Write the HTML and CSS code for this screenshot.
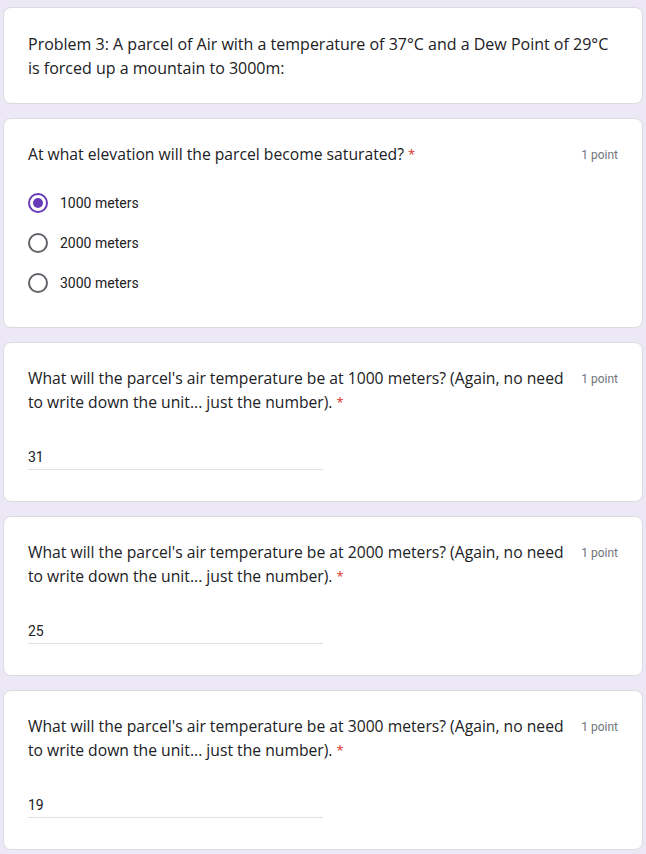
FILE: index.html
```html
<!DOCTYPE html>
<html>
<head>
<meta charset="utf-8">
<link rel="stylesheet" href="styles.css">
</head>
<body>
<main class="form">
  <section class="card header-card">
    <div class="section-title">Problem 3: A parcel of Air with a temperature of 37°C and a Dew Point of 29°C is forced up a mountain to 3000m:</div>
  </section>

  <section class="card question radio-q">
    <div class="q-head">
      <div class="q-title">At what elevation will the parcel become saturated? <span class="req">*</span></div>
      <div class="points">1 point</div>
    </div>
    <div class="options">
      <div class="option"><span class="radio checked"></span><span class="opt-label">1000 meters</span></div>
      <div class="option"><span class="radio"></span><span class="opt-label">2000 meters</span></div>
      <div class="option"><span class="radio"></span><span class="opt-label">3000 meters</span></div>
    </div>
  </section>

  <section class="card question">
    <div class="q-head">
      <div class="q-title">What will the parcel's air temperature be at 1000 meters? (Again, no need to write down the unit... just the number). <span class="req">*</span></div>
      <div class="points">1 point</div>
    </div>
    <div class="answer">31</div>
  </section>

  <section class="card question">
    <div class="q-head">
      <div class="q-title">What will the parcel's air temperature be at 2000 meters? (Again, no need to write down the unit... just the number). <span class="req">*</span></div>
      <div class="points">1 point</div>
    </div>
    <div class="answer">25</div>
  </section>

  <section class="card question">
    <div class="q-head">
      <div class="q-title">What will the parcel's air temperature be at 3000 meters? (Again, no need to write down the unit... just the number). <span class="req">*</span></div>
      <div class="points">1 point</div>
    </div>
    <div class="answer">19</div>
  </section>
</main>
</body>
</html>
```

FILE: styles.css
```css
html, body {
  margin: 0;
  padding: 0;
  background: #ede8f6;
}

body {
  font-family: "Open Sans", "Liberation Sans", sans-serif;
  color: #202124;
}

.form {
  display: flex;
  flex-direction: column;
  gap: 14px;
  padding: 7px 3px 0 3px;
}

.card {
  background: #ffffff;
  border: 1px solid #dadce0;
  border-radius: 8px;
  padding: 24px 24px 24px 24px;
}

.header-card {
  padding-bottom: 23px;
}

.section-title {
  font-size: 16px;
  font-weight: 500;
  line-height: 24px;
  color: #202124;
}

.q-head {
  display: flex;
  align-items: flex-start;
}

.q-title {
  flex: 1;
  font-size: 15.7px;
  line-height: 24px;
  color: #202124;
  margin-top: -1px;
  margin-bottom: 1px;
}

.req {
  color: #d93025;
  font-size: 13px;
  vertical-align: 1px;
}

.points {
  flex: none;
  margin-left: 12px;
  font-family: Roboto, "Liberation Sans", sans-serif;
  font-size: 12px;
  line-height: 24px;
  color: #70757a;
}

.options {
  margin-top: 16px;
  display: flex;
  flex-direction: column;
}

.option {
  display: flex;
  align-items: center;
  height: 40px;
}

.radio {
  box-sizing: border-box;
  width: 20px;
  height: 20px;
  border: 2px solid #5f6368;
  border-radius: 50%;
  display: flex;
  align-items: center;
  justify-content: center;
}

.radio.checked {
  border-color: #673ab7;
}

.radio.checked::after {
  content: "";
  width: 10px;
  height: 10px;
  border-radius: 50%;
  background: #673ab7;
}

.opt-label {
  margin-left: 12px;
  font-family: Roboto, "Liberation Sans", sans-serif;
  font-size: 14px;
  color: #202124;
}

.radio-q {
  padding-bottom: 24px;
}

.answer {
  margin-top: 30px;
  width: 295px;
  font-family: Roboto, "Liberation Sans", sans-serif;
  font-size: 14px;
  line-height: 24px;
  color: #202124;
  border-bottom: 1px solid #e0e0e0;
  margin-bottom: 7px;
}
```
